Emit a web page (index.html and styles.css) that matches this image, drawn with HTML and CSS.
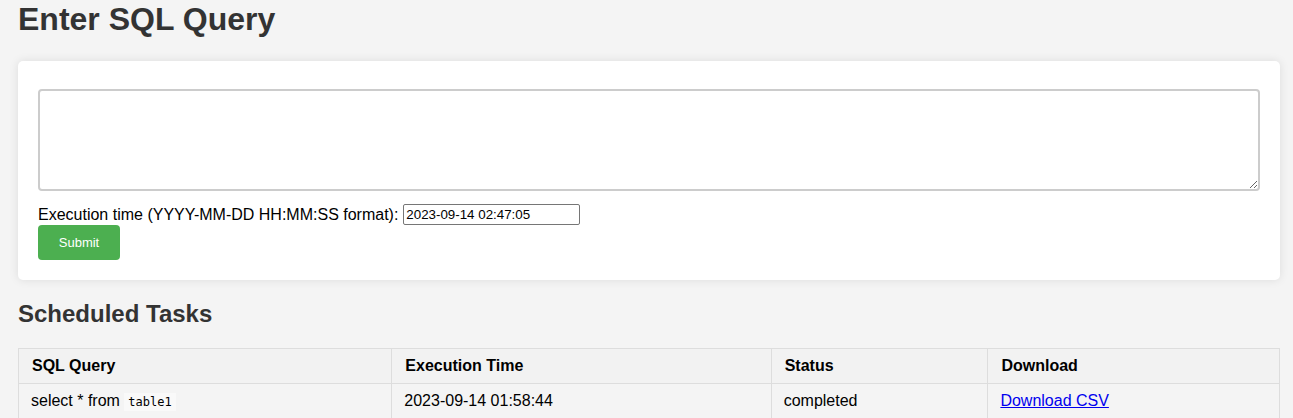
FILE: index.html
```html
<!DOCTYPE html>
<html>
<head>
<meta charset="utf-8">
<title>SQL Scheduler</title>
<link rel="stylesheet" href="styles.css">
</head>
<body>
<h1 class="title">Enter SQL Query</h1>
<div class="card">
  <form class="query-form">
    <textarea class="query-input"></textarea>
    <div class="time-row">
      <label class="time-label">Execution time (YYYY-MM-DD HH:MM:SS format):</label>
      <input class="time-input" type="text" value="2023-09-14 02:47:05">
    </div>
    <button class="submit-btn" type="button">Submit</button>
  </form>
</div>
<h2 class="subtitle">Scheduled Tasks</h2>
<table class="tasks">
  <thead>
    <tr>
      <th class="c1">SQL Query</th>
      <th class="c2">Execution Time</th>
      <th class="c3">Status</th>
      <th class="c4">Download</th>
    </tr>
  </thead>
  <tbody>
    <tr>
      <td>select * from <code class="code">table1</code></td>
      <td>2023-09-14 01:58:44</td>
      <td>completed</td>
      <td><a class="link" href="#">Download CSV</a></td>
    </tr>
  </tbody>
</table>
</body>
</html>
```

FILE: styles.css
```css
html, body {
  margin: 0;
  background: #f4f4f4;
}
body {
  padding: 1px 13px 0 18px;
  font-family: "Liberation Sans", Arial, sans-serif;
  color: #000;
}
.title {
  margin: 0 0 23px 0;
  font-size: 32px;
  font-weight: bold;
  color: #333;
}
.card {
  background: #fff;
  border-radius: 5px;
  box-shadow: 0 0 10px rgba(0,0,0,0.1);
  padding: 28px 20px 20px 20px;
}
.query-form {
  display: flex;
  flex-direction: column;
  align-items: flex-start;
}
.query-input {
  display: block;
  width: 100%;
  height: 102px;
  box-sizing: border-box;
  border: 2px solid #ccc;
  border-radius: 4px;
  margin: 0;
  padding: 8px;
  resize: vertical;
  font-family: "Liberation Mono", monospace;
}
.time-row {
  display: flex;
  align-items: center;
  margin-top: 13px;
  height: 21px;
}
.time-label {
  font-size: 16px;
  color: #000;
  margin-right: 5px;
}
.time-input {
  width: 177px;
  height: 21px;
  box-sizing: border-box;
  border: 1px solid #767676;
  border-radius: 2px;
  padding: 1px 2px;
  font-family: "Liberation Sans", Arial, sans-serif;
  font-size: 13.33px;
  color: #000;
  background: #fff;
}
.submit-btn {
  width: 82px;
  height: 35px;
  background: #4caf50;
  color: #fff;
  border: none;
  border-radius: 4px;
  font-family: "Liberation Sans", Arial, sans-serif;
  font-size: 13px;
  padding: 0;
  margin: 0;
}
.subtitle {
  margin: 20px 0 20px 0;
  font-size: 24px;
  font-weight: bold;
  color: #333;
}
.tasks {
  width: 1262px;
  border-collapse: collapse;
  font-size: 16px;
}
.tasks th, .tasks td {
  border: 1px solid #ddd;
  padding: 8px 12px 8px 12px;
  text-align: left;
  height: 18px;
}
.tasks th {
  background: #f2f2f2;
  font-weight: bold;
  padding-left: 13px;
}
.tasks td {
  background: #f4f4f4;
}
.c1 { width: 348px; }
.c2 { width: 354px; }
.c3 { width: 191px; }
.c4 { width: 266px; }
.code {
  font-family: "DejaVu Sans Mono", monospace;
  font-size: 12px;
  background: #f9f9f9;
  padding: 2px 4px;
}
.link {
  color: #0000ee;
  text-decoration: underline;
}
```
